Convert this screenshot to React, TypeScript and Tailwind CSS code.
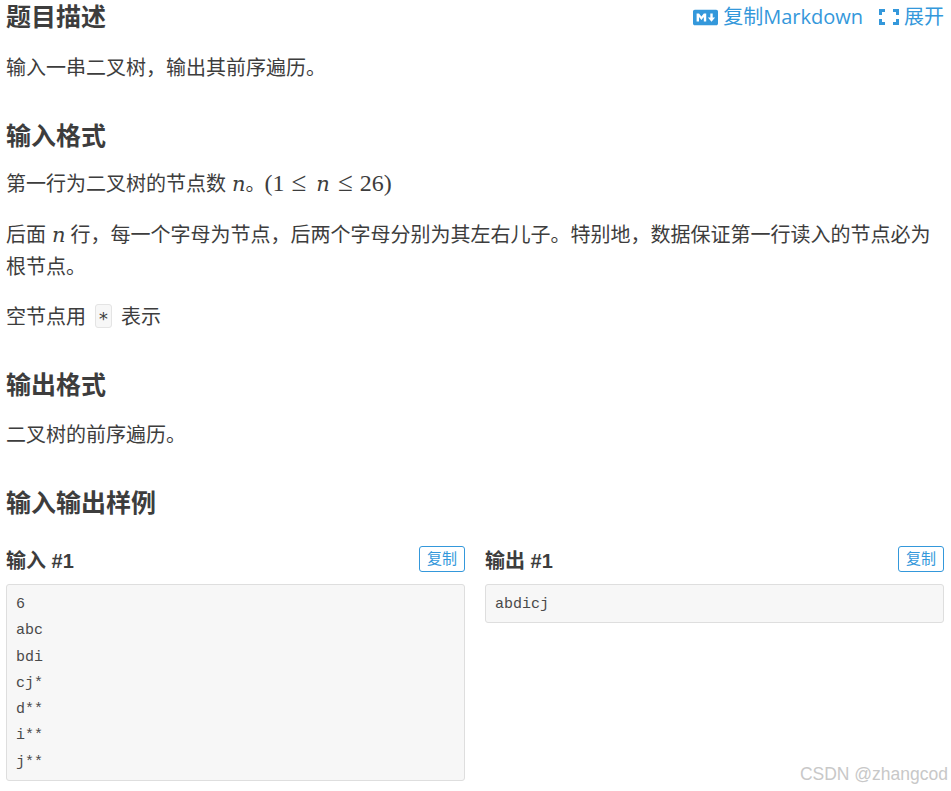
import { FaMarkdown } from 'react-icons/fa';

const sans = "font-['Liberation_Sans','Noto_Sans_CJK_SC',sans-serif]";

function Heading({ children, className = '' }: { children: React.ReactNode; className?: string }) {
  return <h2 className={`text-[25px] leading-[34px] font-bold text-[#3d3d3d] ${className}`}>{children}</h2>;
}

function N({ className = '' }: { className?: string }) {
  return <i className={`font-['DejaVu_Serif',serif] text-[21px] font-normal ${className}`}>n</i>;
}

function Leq({ className = '' }: { className?: string }) {
  return <span className={`font-['Liberation_Serif',serif] text-[27px] ${className}`}>≤</span>;
}

function Sample({ title, lines }: { title: string; lines: string[] }) {
  return (
    <div className="flex-1 min-w-0">
      <div className="flex items-start justify-between h-[26px]">
        <h3 className="text-[20px] leading-[30px] font-bold text-[#3d3d3d]">{title}</h3>
        <button className="h-[26px] w-[46px] rounded-[3px] border border-[#3498db] text-[#3498db] text-[15px] leading-[22px]">复制</button>
      </div>
      <pre className="mt-[12px] rounded-[3px] border border-[#dedede] bg-[#f7f7f7] pl-[9px] pt-[7px] pb-[4px] font-['Liberation_Mono',monospace] text-[15px] leading-[26.25px] text-[#4a4a4a]">
        {lines.join('\n')}
      </pre>
    </div>
  );
}

export default function App() {
  return (
    <div className={`relative w-[951px] h-[791px] overflow-hidden bg-white pl-[6px] pr-[7px] text-[20px] leading-[32px] text-[#3d3d3d] ${sans}`}>
      <div className="flex items-center justify-between">
        <Heading>题目描述</Heading>
        <div className="flex items-center text-[20px] text-[#3498db] font-['Open_Sans','Noto_Sans_CJK_SC',sans-serif]">
          <FaMarkdown className="w-[25px] h-[25px] mr-[5px]" />
          <span>复制Markdown</span>
          <svg viewBox="0 0 20 16" className="w-[20px] h-[16px] ml-[16px] mr-[5px]" fill="currentColor">
            <path d="M0 0h6v3H3v3H0zM14 0h6v6h-3V3h-3zM0 10h3v3h3v3H0zM17 10h3v6h-6v-3h3z" />
          </svg>
          <span>展开</span>
        </div>
      </div>
      <p className="mt-[18px]">输入一串二叉树，输出其前序遍历。</p>

      <Heading className="mt-[35px]">输入格式</Heading>
      <p className="mt-[13px]">
        第一行为二叉树的节点数<N className="ml-[6px]" />。
        <span className="font-['Liberation_Serif',serif] text-[24px] -ml-[1px]">(1</span>
        <Leq className="ml-[7px]" />
        <N className="ml-[10px]" />
        <Leq className="ml-[8px]" />
        <span className="font-['Liberation_Serif',serif] text-[24px] ml-[7px]">26)</span>
      </p>
      <p className="mt-[19px]">
        后面<N className="ml-[6px] mr-[5px]" />行，每一个字母为节点，后两个字母分别为其左右儿子。特别地，数据保证第一行读入的节点必为根节点。
      </p>
      <p className="mt-[18px]">
        空节点用
        <code className="mx-[9px] inline-block h-[24px] w-[17px] rounded-[3px] border border-[#e4e4e4] bg-[#f7f7f7] text-center font-['DejaVu_Sans_Mono',monospace] text-[18px] leading-[28px] align-[-1px]">*</code>
        表示
      </p>

      <Heading className="mt-[35px]">输出格式</Heading>
      <p className="mt-[17px]">二叉树的前序遍历。</p>

      <Heading className="mt-[35px]">输入输出样例</Heading>
      <div className="mt-[26px] flex gap-[20px]">
        <Sample title="输入 #1" lines={['6', 'abc', 'bdi', 'cj*', 'd**', 'i**', 'j**']} />
        <Sample title="输出 #1" lines={['abdicj']} />
      </div>

      <div className="absolute right-[3px] top-[763px] text-[17.5px] leading-[22px] text-[#c8c8c8] font-['Liberation_Sans',sans-serif]">CSDN @zhangcod</div>
    </div>
  );
}
